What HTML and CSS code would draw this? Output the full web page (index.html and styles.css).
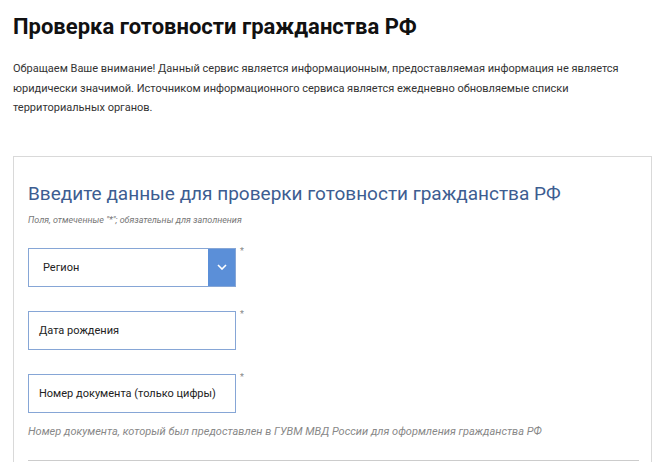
FILE: index.html
```html
<!DOCTYPE html>
<html lang="ru">
<head>
    <meta charset="UTF-8">
    <title>Проверка готовности гражданства РФ</title>
    <link rel="stylesheet" href="styles.css">
</head>
<body>
    <div class="page">
        <h1>Проверка готовности гражданства РФ</h1>
        <p class="notice">
            Обращаем Ваше внимание! Данный сервис является информационным, предоставляемая информация не является
            юридически значимой. Источником информационного сервиса является ежедневно обновляемые списки
            территориальных органов.
        </p>

        <div class="card">
            <h2>Введите данные для проверки готовности гражданства РФ</h2>
            <div class="required-note">Поля, отмеченные "*"; обязательны для заполнения</div>

            <div class="field">
                <div class="select">
                    <span>Регион</span>
                    <div class="select-btn">
                        <svg width="10" height="6" viewBox="0 0 10 6"><path d="M1 1l4 4 4-4" fill="none" stroke="#fff" stroke-width="1.6"/></svg>
                    </div>
                </div>
                <span class="star">*</span>
            </div>

            <div class="field">
                <div class="input">Дата рождения</div>
                <span class="star">*</span>
            </div>

            <div class="field">
                <div class="input">Номер документа (только цифры)</div>
                <span class="star">*</span>
            </div>
            <div class="hint">Номер документа, который был предоставлен в ГУВМ МВД России для оформления гражданства РФ</div>

            <div class="divider"></div>
        </div>
    </div>
</body>
</html>
```

FILE: styles.css
```css
body {
    margin: 0;
    font-family: Roboto, 'Noto Sans', sans-serif;
    color: #222;
    background: #fff;
}
.page {
    padding: 14px 0 0 13px;
}
h1 {
    font-size: 22px;
    font-weight: 700;
    margin: 0 0 20px;
    color: #111;
}
.notice {
    font-size: 11px;
    line-height: 19.5px;
    margin: 0 0 38px;
    width: 620px;
    color: #333;
}
.card {
    width: 610px;
    border: 1px solid #d9d9d9;
    border-bottom: none;
    padding: 25px 13px 0 14px;
    height: 290px;
}
h2 {
    font-size: 19px;
    font-weight: 400;
    color: #3d5d91;
    margin: 0;
}
.required-note {
    font-size: 9px;
    font-style: italic;
    color: #777;
    margin: 10px 0 23px;
}
.field {
    display: flex;
    align-items: flex-start;
    margin-bottom: 24px;
}
.select, .input {
    width: 206px;
    height: 37px;
    border: 1px solid #86a6d6;
    display: flex;
    align-items: center;
    font-size: 11px;
    color: #222;
}
.select span {
    flex: 1;
    padding-left: 14px;
}
.input::before {
    content: "";
    width: 10px;
}
.select-btn {
    width: 27px;
    height: 37px;
    background: #5b8fd8;
    display: flex;
    align-items: center;
    justify-content: center;
}
.star {
    font-size: 9px;
    color: #888;
    margin-left: 4px;
    margin-top: -2px;
}
.hint {
    font-size: 11px;
    font-style: italic;
    color: #888;
    margin-top: -12px;
}
.divider {
    margin-top: 22px;
    width: 611px;
    border-top: 1px solid #ccc;
}
```
